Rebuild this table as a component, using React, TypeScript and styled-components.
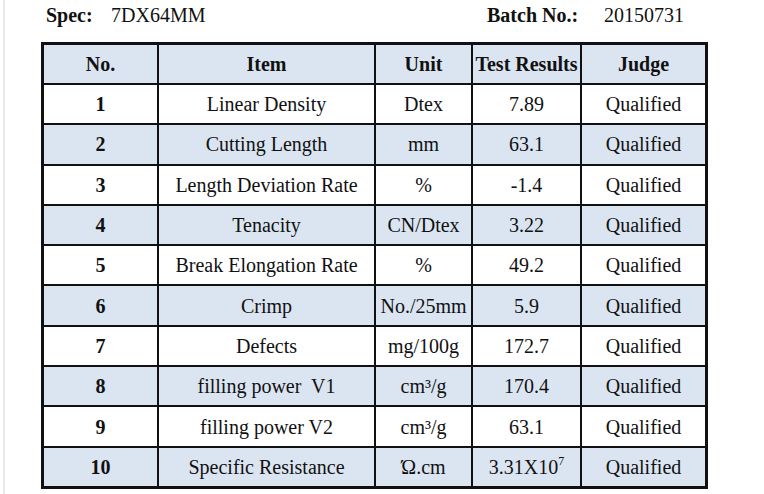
import React from "react";
import styled, { createGlobalStyle } from "styled-components";

const Global = createGlobalStyle`
  html, body { margin: 0; padding: 0; background: #ffffff; }
  body { font-family: "Liberation Serif", "Times New Roman", serif; color: #111; }
`;

const Page = styled.div`
  margin-left: 3px;
  border-left: 2px solid #e6e9ee;
  padding-left: 36px;
  width: 720px;
  height: 494px;
  box-sizing: border-box;
`;

const InfoBar = styled.div`
  display: grid;
  grid-template-columns: 65px 376px 117px auto;
  padding-left: 5px;
  height: 42px;
  align-items: start;
  padding-top: 3px;
  box-sizing: border-box;
  font-size: 20px;
  line-height: 24px;
`;

const Label = styled.span`
  font-weight: bold;
`;

const Value = styled.span`
  font-weight: normal;
`;

const Table = styled.table`
  border-collapse: collapse;
  table-layout: fixed;
  font-size: 20px;
  border: 3px solid #111;
`;

const Row = styled.tr<{ $shade: boolean }>`
  background: ${(p) => (p.$shade ? "#dbe5f1" : "#ffffff")};
`;

const Cell = styled.td<{ $bold?: boolean }>`
  border: 2px solid #111;
  height: 38.3px;
  padding: 0;
  text-align: center;
  vertical-align: middle;
  font-weight: ${(p) => (p.$bold ? "bold" : "normal")};
  white-space: pre;
  line-height: 22px;
`;

const Head = styled.th<{ $w: number }>`
  border: 2px solid #111;
  width: ${(p) => p.$w}px;
  height: 38px;
  padding: 0;
  text-align: center;
  vertical-align: middle;
  font-weight: bold;
  white-space: nowrap;
  line-height: 22px;
`;

const Sup = styled.sup`
  font-size: 12px;
  line-height: 0;
  vertical-align: 9px;
`;

type Item = { no: string; item: string; unit: React.ReactNode; result: React.ReactNode };

const rows: Item[] = [
  { no: "1", item: "Linear Density", unit: "Dtex", result: "7.89" },
  { no: "2", item: "Cutting Length", unit: "mm", result: "63.1" },
  { no: "3", item: "Length Deviation Rate", unit: "%", result: "-1.4" },
  { no: "4", item: "Tenacity", unit: "CN/Dtex", result: "3.22" },
  { no: "5", item: "Break Elongation Rate", unit: "%", result: "49.2" },
  { no: "6", item: "Crimp", unit: "No./25mm", result: "5.9" },
  { no: "7", item: "Defects", unit: "mg/100g", result: "172.7" },
  { no: "8", item: "filling power  V1", unit: "cm³/g", result: "170.4" },
  { no: "9", item: "filling power V2", unit: "cm³/g", result: "63.1" },
  {
    no: "10",
    item: "Specific Resistance",
    unit: "Ώ.cm",
    result: (
      <>
        3.31X10<Sup>7</Sup>
      </>
    ),
  },
];

export default function App() {
  return (
    <>
      <Global />
      <Page>
        <InfoBar>
          <Label>Spec:</Label>
          <Value>7DX64MM</Value>
          <Label>Batch No.:</Label>
          <Value>20150731</Value>
        </InfoBar>
        <Table>
          <thead>
            <Row $shade={true}>
              <Head $w={113}>No.</Head>
              <Head $w={215}>Item</Head>
              <Head $w={95}>Unit</Head>
              <Head $w={107}>Test Results</Head>
              <Head $w={123}>Judge</Head>
            </Row>
          </thead>
          <tbody>
            {rows.map((r, i) => (
              <Row key={r.no} $shade={i % 2 === 1}>
                <Cell $bold>{r.no}</Cell>
                <Cell>{r.item}</Cell>
                <Cell>{r.unit}</Cell>
                <Cell>{r.result}</Cell>
                <Cell>Qualified</Cell>
              </Row>
            ))}
          </tbody>
        </Table>
      </Page>
    </>
  );
}
